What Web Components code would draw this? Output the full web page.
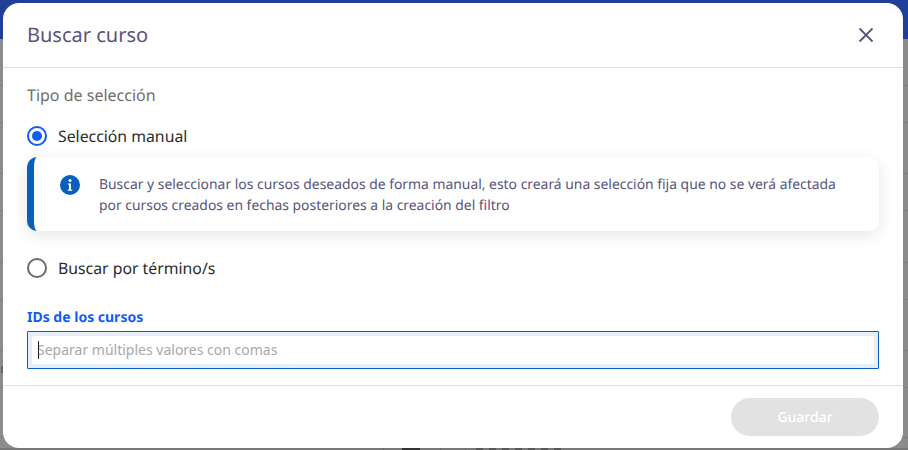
<!DOCTYPE html>
<html lang="es">
<head>
<meta charset="utf-8">
<title>Buscar curso</title>
<style>
  html, body { margin: 0; height: 100%; overflow: hidden; }
  body { font-family: "Noto Sans", "Open Sans", sans-serif; text-rendering: geometricPrecision; }
</style>
</head>
<body>
<page-backdrop>
  <course-dialog heading="Buscar curso">
    <field-group label="Tipo de selección">
      <radio-option checked>Selección manual</radio-option>
      <info-note>Buscar y seleccionar los cursos deseados de forma manual, esto creará una selección fija que no se verá afectada por cursos creados en fechas posteriores a la creación del filtro</info-note>
      <radio-option>Buscar por término/s</radio-option>
    </field-group>
    <ids-input label="IDs de los cursos" placeholder="Separar múltiples valores con comas"></ids-input>
    <save-button slot="footer">Guardar</save-button>
  </course-dialog>
</page-backdrop>

<script>
// the dimmed page behind the dialog: table rows show up as thin lines at the sides
const rowLines = [85, 122, 173, 210, 262, 299, 350, 387, 437];

class PageBackdrop extends HTMLElement {
  constructor() {
    super();
    const line = "linear-gradient(#7f7f7f, #7f7f7f)";
    const images = rowLines.map(() => line).join(", ");
    const positions = rowLines.map(y => `0 ${y}px`).join(", ");
    const sizes = rowLines.map(() => "100% 1px").join(", ");
    this.attachShadow({ mode: "open" }).innerHTML = `
      <style>
        :host {
          display: flex; flex-direction: column; height: 450px; box-sizing: border-box;
          padding: 3px 5px 2px 3px;
          background-color: #8c8c8c;
          background-image:
            linear-gradient(#1f3f98, #1f3f98),
            linear-gradient(#666, #666),
            linear-gradient(#333, #333),
            linear-gradient(#6a6a6a, #6a6a6a),
            linear-gradient(#6a6a6a, #6a6a6a),
            linear-gradient(#6a6a6a, #6a6a6a),
            repeating-linear-gradient(90deg, #585858 0 7px, #787878 7px 13px),
            linear-gradient(#787878, #787878),
            ${images};
          background-repeat: no-repeat;
          background-position: 0 0, 1px 366px, 402px 448px, 383px 448px, 440px 448px, 465px 448px, 476px 448px, 0 448px, ${positions};
          background-size: 100% 39px, 2px 7px, 18px 2px, 1px 2px, 1px 2px, 1px 2px, 86px 2px, 100% 2px, ${sizes};
        }
      </style>
      <slot></slot>`;
  }
}

class CourseDialog extends HTMLElement {
  constructor() {
    super();
    this.attachShadow({ mode: "open" }).innerHTML = `
      <style>
        :host { display: flex; flex-direction: column; flex: 1; background: #fff; border-radius: 16px; min-height: 0; }
        header { height: 65px; box-sizing: border-box; display: flex; align-items: center; justify-content: space-between; padding: 0 29px 0 24px; border-bottom: 1px solid #e0e0e0; }
        h2 { margin: 0 0 1px; font-size: 20px; font-weight: 400; color: #58557a; }
        svg { width: 16px; height: 16px; display: block; }
        main { flex: 1; padding: 17px 24px 0 24px; }
        footer { height: 63px; box-sizing: border-box; border-top: 1px solid #e0e0e0; display: flex; justify-content: flex-end; padding: 12px 24px 0 0; }
      </style>
      <header>
        <h2 class="title"></h2>
        <svg viewBox="0 0 16 16" fill="none" stroke="#58557a" stroke-width="1.8"><path d="M1.5 1.5l13 13M14.5 1.5l-13 13"/></svg>
      </header>
      <main><slot></slot></main>
      <footer><slot name="footer"></slot></footer>`;
  }
  connectedCallback() {
    this.shadowRoot.querySelector(".title").textContent = this.getAttribute("heading");
  }
}

class FieldGroup extends HTMLElement {
  constructor() {
    super();
    this.attachShadow({ mode: "open" }).innerHTML = `
      <style>
        :host { display: block; }
        .label { font-size: 16px; line-height: 20px; color: #6e6e6e; margin-bottom: 11px; }
      </style>
      <div class="label"></div>
      <slot></slot>`;
  }
  connectedCallback() {
    this.shadowRoot.querySelector(".label").textContent = this.getAttribute("label");
  }
}

class RadioOption extends HTMLElement {
  constructor() {
    super();
    this.attachShadow({ mode: "open" }).innerHTML = `
      <style>
        :host { display: flex; align-items: center; gap: 11px; height: 40px; font-size: 15.8px; color: #2b2b2b; }
        .dot { width: 20px; height: 20px; box-sizing: border-box; border-radius: 50%; border: 2px solid #6b6b6b; display: flex; align-items: center; justify-content: center; }
        :host([checked]) .dot { border-color: #0f5cf5; }
        :host([checked]) .dot::after { content: ""; width: 10px; height: 10px; border-radius: 50%; background: #0f5cf5; }
      </style>
      <span class="dot"></span><slot></slot>`;
  }
}

class InfoNote extends HTMLElement {
  constructor() {
    super();
    this.attachShadow({ mode: "open" }).innerHTML = `
      <style>
        :host { display: flex; gap: 19px; height: 74px; box-sizing: border-box; margin: 1px 0 17px; padding: 17px 24px 0 26px; border-radius: 10px; border-left: 7px solid #0860bd; background: #fff; box-shadow: 0 4px 16px rgba(0,0,0,.1); font-size: 13.9px; line-height: 21px; color: #58557a; }
        svg { width: 20px; height: 20px; flex: none; margin-top: 1px; }
      </style>
      <svg viewBox="0 0 20 20"><circle cx="10" cy="10" r="10" fill="#0860bd"/><circle cx="10" cy="5.6" r="1.5" fill="#fff"/><path d="M8 8.4h3v6h1.2v1.4H7.8v-1.4H9V9.8H8z" fill="#fff"/></svg>
      <div><slot></slot></div>`;
  }
}

class IdsInput extends HTMLElement {
  constructor() {
    super();
    this.attachShadow({ mode: "open" }).innerHTML = `
      <style>
        :host { display: block; margin-top: 21px; }
        label { display: block; font-size: 14px; line-height: 18px; font-weight: 700; color: #0f5cf5; margin-bottom: 4px; }
        .wrap { position: relative; }
        input { display: block; width: 100%; height: 38px; box-sizing: border-box; border: 1px solid #0860bd; box-shadow: inset 0 0 0 4px #e6eef8; outline: none; border-radius: 1px; padding: 0 9px 2px; font: 14px "Noto Sans", sans-serif; color: #333; background: #fff; }
        input::placeholder { color: #a8a8a8; opacity: 1; }
        .caret { position: absolute; left: 11px; top: 10px; width: 1px; height: 18px; background: #222; }
      </style>
      <label></label>
      <div class="wrap"><input type="text"><span class="caret"></span></div>`;
  }
  connectedCallback() {
    this.shadowRoot.querySelector("label").textContent = this.getAttribute("label");
    this.shadowRoot.querySelector("input").placeholder = this.getAttribute("placeholder");
  }
}

class SaveButton extends HTMLElement {
  constructor() {
    super();
    this.attachShadow({ mode: "open" }).innerHTML = `
      <style>
        :host { display: flex; align-items: center; justify-content: center; width: 148px; height: 38px; border-radius: 19px; background: #e2e2e2; color: #fff; font-size: 14px; font-weight: 500; }
      </style>
      <slot></slot>`;
  }
}

customElements.define("page-backdrop", PageBackdrop);
customElements.define("course-dialog", CourseDialog);
customElements.define("field-group", FieldGroup);
customElements.define("radio-option", RadioOption);
customElements.define("info-note", InfoNote);
customElements.define("ids-input", IdsInput);
customElements.define("save-button", SaveButton);
</script>
</body>
</html>
